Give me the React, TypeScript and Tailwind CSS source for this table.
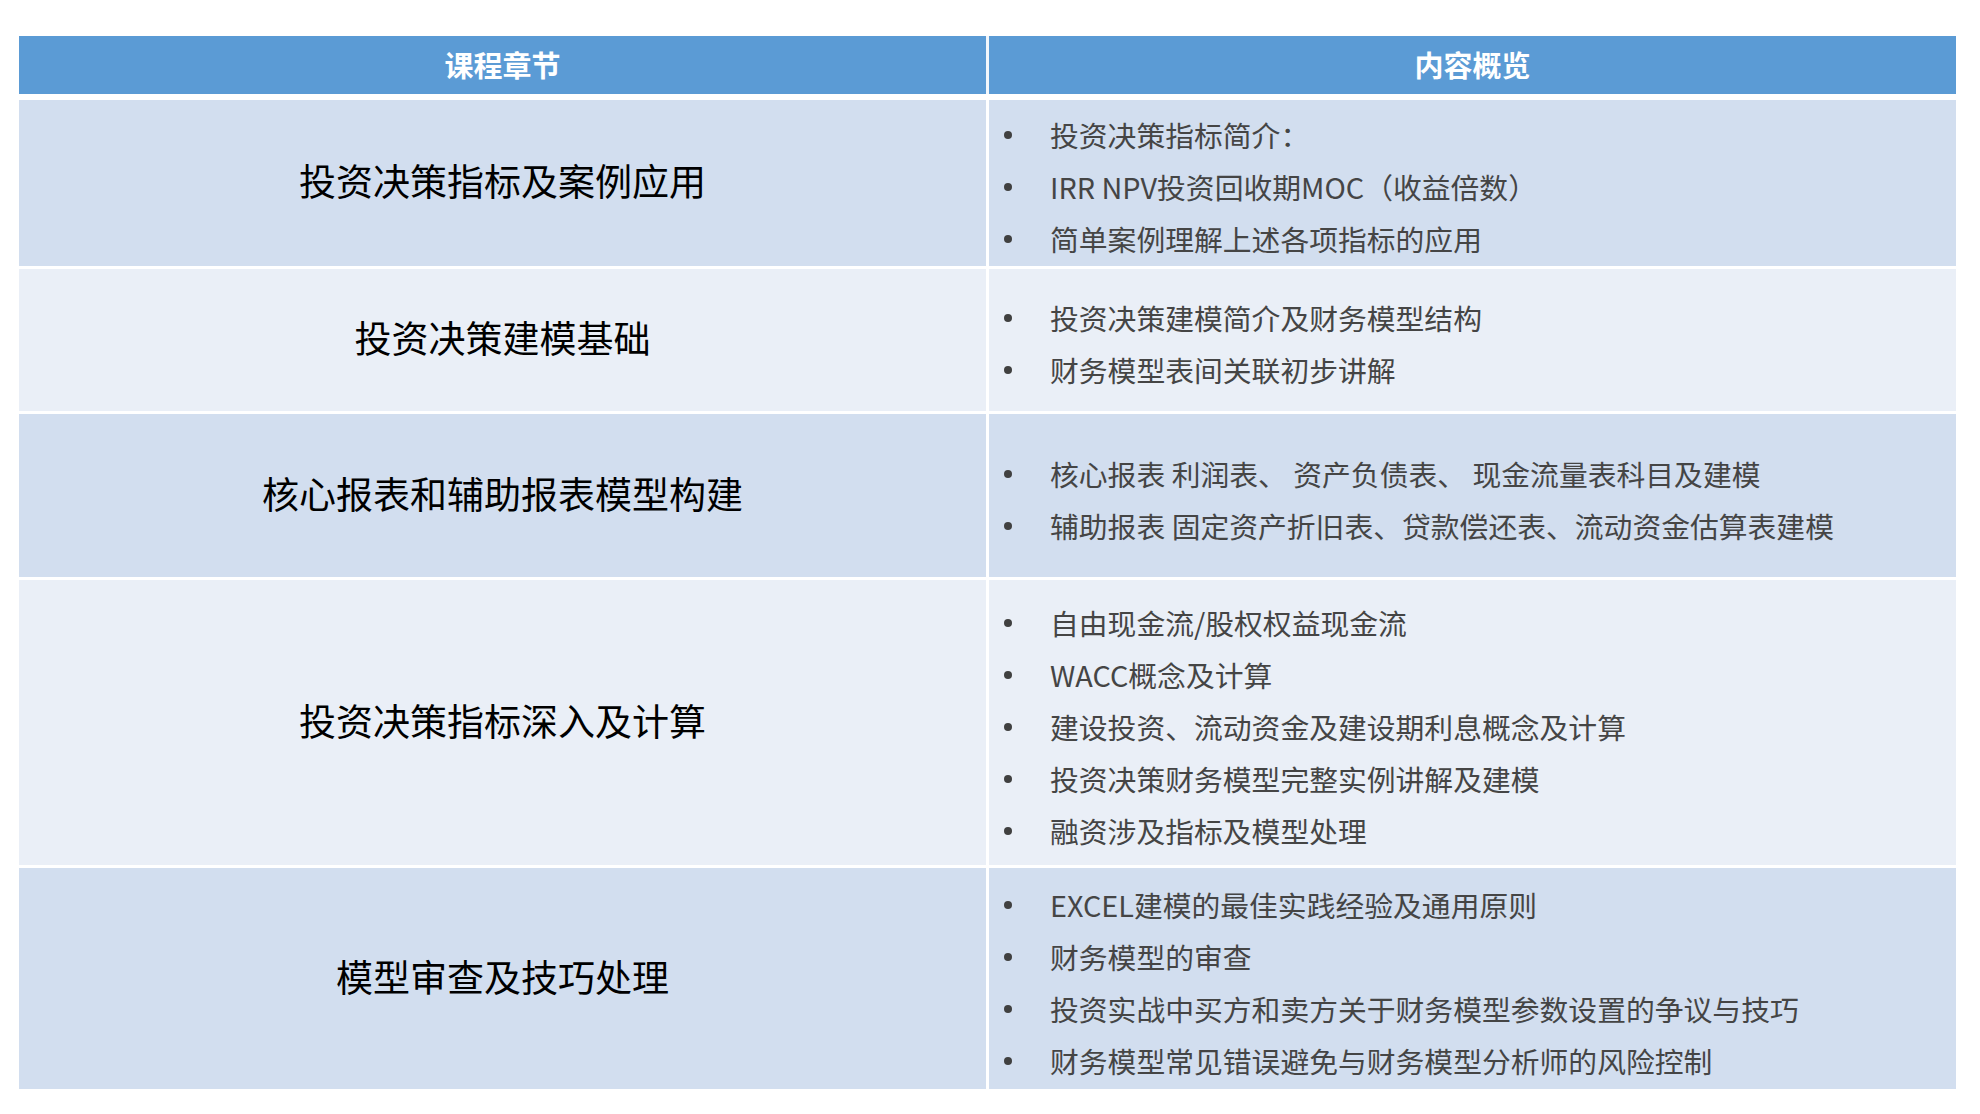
const rows = [
  {
    title: "投资决策指标及案例应用",
    items: ["投资决策指标简介：", "IRR NPV投资回收期MOC（收益倍数）", "简单案例理解上述各项指标的应用"],
    height: "h-[166px]",
    bg: "bg-[#d2deef]",
  },
  {
    title: "投资决策建模基础",
    items: ["投资决策建模简介及财务模型结构", "财务模型表间关联初步讲解"],
    height: "h-[142px]",
    bg: "bg-[#eaeff7]",
  },
  {
    title: "核心报表和辅助报表模型构建",
    items: ["核心报表 利润表、 资产负债表、 现金流量表科目及建模", "辅助报表 固定资产折旧表、贷款偿还表、流动资金估算表建模"],
    height: "h-[163px]",
    bg: "bg-[#d2deef]",
  },
  {
    title: "投资决策指标深入及计算",
    items: [
      "自由现金流/股权权益现金流",
      "WACC概念及计算",
      "建设投资、流动资金及建设期利息概念及计算",
      "投资决策财务模型完整实例讲解及建模",
      "融资涉及指标及模型处理",
    ],
    height: "h-[285px]",
    bg: "bg-[#eaeff7]",
  },
  {
    title: "模型审查及技巧处理",
    items: [
      "EXCEL建模的最佳实践经验及通用原则",
      "财务模型的审查",
      "投资实战中买方和卖方关于财务模型参数设置的争议与技巧",
      "财务模型常见错误避免与财务模型分析师的风险控制",
    ],
    height: "h-[221px]",
    bg: "bg-[#d2deef]",
  },
];

export default function App() {
  return (
    <div
      className="min-h-screen bg-white pl-[19px] pt-[36px]"
      style={{ fontFamily: '"Noto Sans CJK SC", "Noto Sans", sans-serif' }}
    >
      <div className="flex w-[1937px] flex-col">
        {/* header */}
        <div className="grid h-[58px] grid-cols-[967px_967px] gap-x-[3px] bg-[#f2f6fb]">
          <div className="flex items-center justify-center bg-[#5b9bd5] text-[29px] font-bold text-white">课程章节</div>
          <div className="flex items-center justify-center bg-[#5b9bd5] text-[29px] font-bold text-white">内容概览</div>
        </div>

        <div className="mt-[6px] flex flex-col gap-y-[3px]">
          {rows.map((row) => (
            <div key={row.title} className={`grid grid-cols-[967px_967px] gap-x-[3px] ${row.height}`}>
              <div className={`flex items-center justify-center pb-[4px] text-[37px] text-black ${row.bg}`}>{row.title}</div>
              <div className={`flex flex-col justify-center pl-[15px] pt-[8px] ${row.bg}`}>
                {row.items.map((item) => (
                  <div key={item} className="flex h-[52px] items-center gap-x-[38px] text-[28.8px] text-[#454545]">
                    <span className="h-[8px] w-[8px] shrink-0 rounded-full bg-[#404040]" />
                    <span className="whitespace-nowrap">{item}</span>
                  </div>
                ))}
              </div>
            </div>
          ))}
        </div>
      </div>
    </div>
  );
}
